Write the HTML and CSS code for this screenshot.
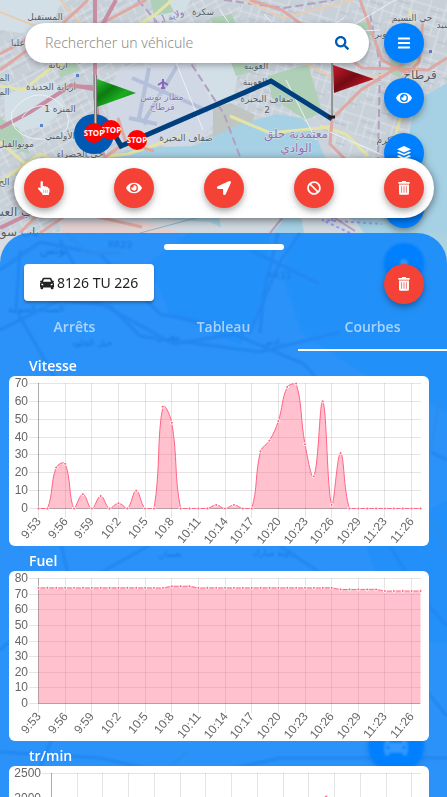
FILE: index.html
```html
<!DOCTYPE html>
<html lang="fr">
<head>
<meta charset="utf-8">
<meta name="viewport" content="width=device-width, initial-scale=1">
<title>Suivi de véhicule</title>
<link rel="stylesheet" href="styles.css">
</head>
<body>
<svg class="defs" aria-hidden="true">
  <symbol id="i-search" viewBox="0 0 512 512"><path d="M505 442.700L405.300 343c-4.500-4.500-10.600-7-17-7H372c27.600-35.300 44-79.700 44-128C416 93.100 322.900 0 208 0S0 93.100 0 208s93.100 208 208 208c48.300 0 92.700-16.400 128-44v16.300c0 6.400 2.500 12.500 7 17l99.700 99.700c9.400 9.400 24.600 9.400 33.900 0l28.300-28.300c9.400-9.400 9.400-24.600.1-34zM208 336c-70.700 0-128-57.200-128-128 0-70.700 57.200-128 128-128 70.700 0 128 57.200 128 128 0 70.700-57.200 128-128 128z"/></symbol>
  <symbol id="i-eye" viewBox="0 0 576 512"><path d="M572.520 241.400C518.290 135.590 410.930 64 288 64S57.680 135.640 3.480 241.410a32.350 32.350 0 0 0 0 29.190C57.710 376.410 165.070 448 288 448s230.320-71.640 284.520-177.410a32.350 32.350 0 0 0 0-29.190zM288 400a144 144 0 1 1 144-144 143.930 143.930 0 0 1-144 144zm0-240a95.310 95.310 0 0 0-25.310 3.790 47.850 47.850 0 0 1-66.900 66.900A95.780 95.780 0 1 0 288 160z"/></symbol>
  <symbol id="i-arrow" viewBox="0 0 512 512"><path d="M444.520 3.520L28.740 195.420c-47.970 22.390-31.980 92.750 19.190 92.750h175.910v175.910c0 51.170 70.360 67.170 92.750 19.190l191.900-415.780c15.990-38.390-25.590-79.970-63.970-63.970z"/></symbol>
  <symbol id="i-ban" viewBox="0 0 512 512"><path d="M256 8C119.034 8 8 119.033 8 256s111.034 248 248 248 248-111.034 248-248S392.967 8 256 8zm130.108 117.892c65.448 65.448 70 165.481 20.677 235.637L150.470 105.216c70.204-49.356 170.226-44.735 235.638 20.676zM125.892 386.108c-65.448-65.448-70-165.481-20.677-235.637L361.530 406.784c-70.203 49.356-170.226 44.736-235.638-20.676z"/></symbol>
  <symbol id="i-menu" viewBox="0 0 14 14"><path d="M1 1.500h12v2H1zM1 6h12v2H1zM1 10.500h12v2H1z"/></symbol>
  <symbol id="i-layers" viewBox="0 0 14 14"><path d="M7 0l7 3.200-7 3.200-7-3.200zM1.700 5.500L0 6.700l7 3.100 7-3.100-1.700-1.200L7 8zM1.700 9.100L0 10.300l7 3.200 7-3.200-1.700-1.200L7 11.600z"/></symbol>
  <symbol id="i-trash" viewBox="0 0 14 16"><path d="M4.500 1.200V1a1 1 0 0 1 1-1h3a1 1 0 0 1 1 1v.2H13.500v2H.5v-2zM1.300 4h11.400v10.200a1.500 1.500 0 0 1-1.500 1.500H2.800a1.500 1.500 0 0 1-1.500-1.500zM4 6v7.500h.8V6zm2.600 0v7.500h.8V6zm2.600 0v7.500h.8V6z" fill-rule="evenodd"/></symbol>
  <symbol id="i-hand" viewBox="0 0 14 16"><path d="M3.100 1.300a1.300 1.300 0 0 1 2.600 0V6c.5-.5 1.700-.4 2 .4.600-.5 1.700-.3 2 .5.700-.5 2-.2 2 1l.1.400c.6-.2 1.500.2 1.500 1.100V12c0 1-.5 1.400-.7 2.300V16H5.200v-1.500L.3 9.200C-.5 7.900 1 6.900 1.900 7.500l1.200 1z"/><path d="M6.600 10v3.500M8.700 10v3.500M10.800 10v3.500" stroke="#f44336" stroke-width=".5"/></symbol>
  <symbol id="i-car" viewBox="0 0 16 14"><path fill-rule="evenodd" d="M4.600 1h6.800a2 2 0 0 1 1.900 1.300l.9 2.200h1.300c.6 0 .6 1.200-.1 1.300l-.4.100c.6.400 1 1 1 1.700V11c0 .5-.3.800-.6 1v1a1 1 0 0 1-1 1h-1a1 1 0 0 1-1-1v-.8H3.600v.8a1 1 0 0 1-1 1h-1a1 1 0 0 1-1-1v-1C.3 11.800 0 11.500 0 11V7.600c0-.7.400-1.300 1-1.700l-.4-.1C-.1 5.700-.1 4.500.5 4.500h1.300l.9-2.200A2 2 0 0 1 4.600 1zm.2 1.800a.6.600 0 0 0-.5.400l-.9 2.300h9.200l-.9-2.300a.6.600 0 0 0-.5-.4zM1.500 8.300c0 1 .8 1.400 1.700 1.400.6 0 1-.2.700-.7-.3-.6-1-1.500-1.700-1.500-.4 0-.7.400-.7.800zm13 0c0-.4-.3-.8-.7-.8-.7 0-1.400.9-1.700 1.500-.3.500.1.700.7.700.9 0 1.700-.4 1.700-1.400z"/></symbol>
</svg>

<div class="app">
  <svg class="map" viewBox="0 0 447 797" preserveAspectRatio="xMidYMin slice" role="img" aria-label="Carte du trajet">
    <defs>
      <pattern id="streets" width="46" height="38" patternUnits="userSpaceOnUse" patternTransform="rotate(-28)">
        <path d="M0 5h46M0 12h30M8 19h38M0 26h46M0 32h24M6 0v38M14 0v19M22 5v33M31 0v26M40 12v26" stroke="#dde2e9" stroke-width="1" fill="none"/>
        <path d="M2 8h15M18 15h14M24 29h17M9 22h9M34 3h9" stroke="#bac1cb" stroke-width="1" fill="none"/>
      </pattern>
      <pattern id="streets2" width="34" height="42" patternUnits="userSpaceOnUse" patternTransform="rotate(17)">
        <path d="M0 6h34M10 15h24M0 24h34M0 34h20M5 0v42M13 6v28M21 0v42M29 15v27" stroke="#dde2e9" stroke-width="1" fill="none"/>
        <path d="M7 10h12M15 19h13M4 29h8M23 38h9" stroke="#b6bdc8" stroke-width="1" fill="none"/>
      </pattern>
      <linearGradient id="green" x1="0" y1="0" x2="1" y2="1"><stop offset="0" stop-color="#27c32b"/><stop offset=".35" stop-color="#0d7a12"/><stop offset=".6" stop-color="#1bab20"/><stop offset="1" stop-color="#0e7c13"/></linearGradient>
      <linearGradient id="red" x1="0" y1="0" x2="1" y2="1"><stop offset="0" stop-color="#cf1c2c"/><stop offset=".45" stop-color="#720b12"/><stop offset=".7" stop-color="#b01522"/><stop offset="1" stop-color="#750b12"/></linearGradient>
      <linearGradient id="pole"><stop offset="0" stop-color="#666"/><stop offset=".5" stop-color="#ccc"/><stop offset="1" stop-color="#555"/></linearGradient>
    </defs>
    <rect width="447" height="797" fill="#c8d0d8"/>
    <rect width="240" height="240" fill="url(#streets)"/>
    <rect x="240" width="207" height="180" fill="url(#streets2)"/>
    <rect y="235" width="447" height="562" fill="#d7dde0"/>
    <g fill="#d3dfe6">
      <path d="M0 0h62l-8 20-26 14-28-4zM196 60h44l-8 50-30 20zM155 0h36l-12 20-30 2z"/>
      <path d="M4 95l50-15 12 26-20 20-40 8z"/>
    </g>
    <g fill="#afd0b6">
      <path d="M268 76l40-12 14 48-16 8-34-22zM230 60l26-4 4 14-24 6zM150 0l18 0 6 12-20 4zM344 28l26-8 4 14-26 8zM0 118l18 10 12 26-20-6-10-8zM58 66l16-6 6 10-20 8zM396 44l12 14-8 20-12-6zM30 188l14-6 8 10-18 8zM210 18l22-4 4 10-20 6z"/>
    </g>
    <path d="M120 68l72-8 26 60-28 28-78-6-6-44z" fill="#d0d8e5"/>
    <g stroke="#b4c0da" stroke-width="4" fill="none"><path d="M132 78l76 33M149 68l-10 50 8 6M129 118l28 6M177 66l-32 54"/></g>
    <path d="M213 107l18-4 24 12-4 12-22 6-16 4z" fill="#bfc6c1"/>
    <path d="M89 164l48-16 58-2 40-20 42-12 24 4 21 20 22 22 18 26 20 8 34-4v43H92l-14-34z" fill="#a6d1e4"/>
    <path d="M447 83l-24 14-12 24-4 32 6 28 2 52h32z" fill="#a6d1e4"/>
    <path d="M308 118l24 4 62 36-8 32-48-2z" fill="#cbd4dc"/>
    <path d="M316 122l38 18 36 20-20 18-34-20z" fill="url(#streets2)"/>
    <path d="M60 218l90 0 60 4 22 11H60zM232 196l28 4 22 22-10 11h-50l-4-22zM300 210l24-6 32 18 8 11h-60z" fill="#d0d9e0"/>
    <path d="M62 222l80-1 40 12H62z" fill="#e2cfd0"/>
    <g fill="none" stroke="#b9a0bd" stroke-width="2"><path d="M235 202l24-4M240 210l30-4M270 233l22-27 12 4M318 200l28 18M330 215l25 16"/></g>
    <g fill="none" stroke="#9b9bff" stroke-width="2" stroke-dasharray="3 3"><path d="M334 182l-2 40M350 233l-28-13 60 4"/></g>
    <path d="M140 233L300 190M90 216l120-14" stroke="#8fb2c8" fill="none"/>
    <g fill="none" stroke="#b59fc0" stroke-width="2" stroke-dasharray="8 4"><path d="M138 0l48 56 38 58 18 48M370 14l10 50-2 100M224 0l60 8 50-8"/></g>
    <g fill="none" stroke="#e8ccb2" stroke-width="2"><path d="M0 12l70 28 130 14M245 0l38 18 70-18M300 60l40 22 46-8M60 0l30 34"/></g>
    <g fill="none" stroke="#e4e4a6" stroke-width="3"><path d="M0 86l24 4 24-20 60-26 48-30 16-14M0 182l40-28 30 12 24-8 34-4 60-20M320 126l26 8 22 22M410 10l6 60-14 26M230 116l40 17 60-6M392 98l10 14-16 58M0 142l44 38 44 8"/></g>
    <g fill="none" stroke="#dfa8a2" stroke-width="3"><path d="M0 70l60-44L88 0M0 54l30-16 48-2 68-36M250 0l32 10 80 58 66 2 19-12M360 0l22 60 26 14M332 120l-2 24 20 20M331 120l30-30 42-26M20 233l44-46 44-32 28-20M423 20l-4 42-20 20 4 10M118 118l8 25 28 8M40 233l32-22 70 16"/></g>
    <g fill="none" stroke="#c88da2" stroke-width="4"><path d="M95 0v96l8 60M0 128l30-16 40-26 40 2M70 85l24 4M88 156L50 204l-50 24M78 63l22-34 16-29"/></g>
    <g fill="none" stroke="#eef1f5" stroke-width="1"><path d="M12 112c14-20 34-22 48-8s10 30-8 34c-22 5-44-6-40-26zM22 118c8-14 26-16 32-6M300 34l80-4M286 80l30 60M220 10l26 38M264 14l30 34 50-30M175 60l28 70M330 132l60 26M395 0l-40 24"/></g>

    <g class="map-labels">
      <text x="45" y="20">المستقبل</text><text x="203" y="15">سكرة</text><text x="412" y="21">حي النسيم</text>
      <text x="18" y="46">عليا</text><text x="382" y="37">نوبر</text><text x="58" y="68">أريانة</text>
      <text x="51" y="90">أريانة الجديدة</text><text x="60" y="112">المنزه 1</text><text x="60" y="139">الأولمبي</text>
      <text x="16" y="147">موتوالفيل</text><text x="80" y="157">حي الخضراء</text><text x="256" y="69">العوينة</text>
      <text x="255" y="85">العوينة</text><text x="267" y="102">ضفاف البحيرة</text><text x="267" y="113">2</text>
      <text x="186" y="141">ضفاف البحيرة</text><text x="387" y="143">الكرم</text><text x="4" y="81">الم</text><text x="4" y="95">الم</text>
      <text x="4" y="185">الح</text><text class="big" x="12" y="216">باب العسل</text><text class="big" x="12" y="236">باب سويقة</text>
      <text class="big" x="420" y="79">قرطاج</text><text x="444" y="28">سيد</text>
      <g class="violet"><text x="162" y="100">مطار تونس</text><text x="162" y="110">قرطاج</text><text x="165" y="22" transform="rotate(-22 165 18)">ولاية أريانة</text>
      <text class="big" x="296" y="138">معتمدية حلق</text><text class="big" x="296" y="152">الوادي</text></g>
    </g>
    <path d="M163 79v9M158 85l5-3 5 3M161 88h4" stroke="#8768b8" stroke-width="2" fill="none"/>
    <rect x="76" y="74" width="3" height="3" fill="#5a84c8"/><rect x="40" y="124" width="3" height="3" fill="#5a84c8"/><rect x="429" y="50" width="3" height="3" fill="#6678b8"/>

    <g class="under">
      <path d="M190 233h80l-4 58-26 54-70-30-22-52z" fill="#a3cfdc"/>
      <path d="M447 233h-150l-16 40 20 60 60 40 86 40z" fill="#aad3df"/>
      <path d="M366 546l12 36 40 60h29V500z" fill="#a8d0dc"/>
      <g fill="none" stroke="#a7a2b8" stroke-width="3"><path d="M0 270l40-28 60 12 60 60 90 18 30-70 20-29M60 240l34 60 80 44 60-10 70 30 40 46 103 50M0 330l60-30 50 6 30 30 120 16 80-20M20 250l-4 60 40 70M250 250l70 34M278 233l-14 60-4 40M60 540l14 60-6 100-40 97M0 650l70-60 80-45M280 546l60 40 107 130M0 752l100 6 90 20 90-20 167 0M390 546l30 50 27 30"/></g>
      <g fill="none" stroke="#d7c6b4" stroke-width="3"><path d="M66 233l20 20 36 0M190 233l10 20M10 400l40 70-30 80M440 400l-20 100 27 50M128 797l60-45"/></g>
      <g class="map-labels"><text class="big" x="54" y="254">تونس</text><text x="120" y="248">RR23</text><text x="279" y="279">RR33</text><text x="36" y="312">السيدة المنوبية</text><text x="92" y="346">جبل الجلود</text><text x="168" y="340">مقرين</text><text x="273" y="345">رادس</text><text x="170" y="557">نعسان</text><text x="274" y="556">زاوية مبارك</text></g>
    </g>

    <circle cx="94" cy="134" r="20" fill="#0059b3"/>
    <path d="M103 130h9l9 16 150-65 61 38" fill="none" stroke="#003f7d" stroke-width="5"/>
    <path d="M331 62h2v55h-2z" fill="url(#pole)"/><path d="M333 65l41 14-40 14z" fill="url(#red)"/><path d="M328 117h7" stroke="#222" stroke-width="3"/>
    <path d="M94 75h3v60h-3z" fill="url(#pole)"/><path d="M97 79l39 14-39 14z" fill="url(#green)"/>
    <g class="stop"><circle cx="111" cy="130" r="10"/><text x="111" y="133">STOP</text><circle cx="94" cy="133" r="10"/><text x="94" y="136">STOP</text><circle cx="137" cy="140" r="10"/><text x="137" y="143">STOP</text></g>
  </svg>

  <nav class="fabs" aria-label="Outils de la carte">
    <button class="fab" aria-label="Menu"><svg><use href="#i-menu"/></svg></button>
    <button class="fab" aria-label="Affichage"><svg class="wide"><use href="#i-eye"/></svg></button>
    <button class="fab" aria-label="Couches"><svg><use href="#i-layers"/></svg></button>
    <button class="fab" aria-label="Position"><svg><use href="#i-arrow"/></svg></button>
    <button class="fab" aria-label="Repère"><svg viewBox="0 0 14 14"><circle cx="7" cy="7" r="4"/></svg></button>
  </nav>
  <button class="fab fab-car" aria-label="Véhicules"><svg><use href="#i-car"/></svg></button>

  <form class="search">
    <input type="search" aria-label="Rechercher un véhicule" placeholder="Rechercher un véhicule">
    <button type="button" aria-label="Rechercher"><svg><use href="#i-search"/></svg></button>
  </form>

  <div class="toolbar">
    <button class="fab danger" aria-label="Sélectionner"><svg><use href="#i-hand"/></svg></button>
    <button class="fab danger" aria-label="Voir"><svg class="wide"><use href="#i-eye"/></svg></button>
    <button class="fab danger" aria-label="Suivre"><svg><use href="#i-arrow"/></svg></button>
    <button class="fab danger" aria-label="Bloquer"><svg><use href="#i-ban"/></svg></button>
    <button class="fab danger" aria-label="Supprimer"><svg><use href="#i-trash"/></svg></button>
  </div>

  <main class="panel">
    <div class="handle"></div>
    <div class="vehicle-row">
      <button class="vehicle"><svg><use href="#i-car"/></svg>8126 TU 226</button>
      <button class="fab danger" aria-label="Supprimer le véhicule"><svg><use href="#i-trash"/></svg></button>
    </div>
    <div class="tabs" role="tablist">
      <button role="tab" aria-selected="false">Arrêts</button>
      <button role="tab" aria-selected="false">Tableau</button>
      <button role="tab" aria-selected="true">Courbes</button>
    </div>
    <section class="chart"><h2>Vitesse</h2><div class="card" data-chart="speed"></div></section>
    <section class="chart"><h2>Fuel</h2><div class="card" data-chart="fuel"></div></section>
    <section class="chart"><h2>tr/min</h2><div class="card" data-chart="rpm"></div></section>
  </main>
</div>
<script src="charts.js"></script>
</body>
</html>
```
FILE: styles.css
```css
* { box-sizing: border-box; }

body {
  margin: 0;
  font-family: "Noto Sans", "Open Sans", sans-serif;
  font-size: 14px;
  line-height: 20px;
  color: #222;
}

button, input { font: inherit; color: inherit; border: 0; padding: 0; background: none; }
button { cursor: pointer; }
.defs { position: absolute; width: 0; height: 0; }

.app {
  position: relative;
  height: 100vh;
  overflow: hidden;
  padding-top: 23px;
}

.map { position: absolute; inset: 0; width: 100%; height: 100%; }
.map-labels text {
  font-family: "DejaVu Sans", sans-serif;
  font-size: 9px;
  text-anchor: middle;
  fill: #555b66;
  paint-order: stroke;
  stroke: #dde2e8;
  stroke-width: 1px;
}
.map-labels .big { font-size: 12px; }
.map-labels .violet text { fill: #8a72b4; }
.stop circle { fill: #f00; }
.stop text {
  font-family: "Open Sans", sans-serif;
  font-size: 8px;
  font-weight: 700;
  fill: #fff;
  text-anchor: middle;
}

.fabs {
  position: absolute;
  top: 23px;
  right: 23px;
  display: flex;
  flex-direction: column;
  gap: 15px;
}
.fab {
  display: flex;
  align-items: center;
  justify-content: center;
  width: 40px;
  height: 40px;
  border-radius: 50%;
  background: #0080ff;
  color: #fff;
  box-shadow: 0 3px 5px rgba(0, 0, 0, .2), 0 4px 10px rgba(0, 0, 0, .16);
}
.fab svg { width: 14px; height: 14px; fill: currentColor; }
.fab svg.wide { width: 16px; }
.fab.danger { background: #f44336; }
.fab-car {
  position: absolute;
  right: 23px;
  bottom: 24px;
  width: 56px;
  height: 56px;
}
.fab-car svg { width: 24px; height: 24px; }

.search {
  position: relative;
  display: flex;
  align-items: center;
  height: 40px;
  margin: 0 78px 0 25px;
  padding: 0 20px;
  border-radius: 20px;
  background: #fff;
  box-shadow: 0 2px 6px rgba(0, 0, 0, .3);
}
.search input { flex: 1; min-width: 0; outline: 0; font-weight: 300; }
.search input::placeholder { color: #8c8c8c; opacity: 1; }
.search button { display: flex; color: #0059b3; }
.search svg { width: 14px; height: 14px; fill: currentColor; }

.toolbar {
  position: relative;
  display: flex;
  align-items: center;
  justify-content: space-between;
  height: 60px;
  margin: 95px 13px 15px 14px;
  padding: 0 10px;
  border-radius: 30px;
  background: #fff;
  box-shadow: 0 2px 8px rgba(0, 0, 0, .5);
}

.panel {
  position: relative;
  min-height: calc(100vh - 233px);
  padding-top: 11px;
  border-radius: 30px 30px 0 0;
  background: rgba(0, 128, 255, .8);
  backdrop-filter: blur(1px);
}
.handle {
  width: 120px;
  height: 6px;
  margin: 0 auto 14px;
  border-radius: 3px;
  background: #fff;
}
.vehicle-row {
  display: flex;
  align-items: flex-start;
  justify-content: space-between;
  padding: 0 23px 0 24px;
}
.vehicle {
  display: flex;
  align-items: center;
  gap: 3px;
  height: 37px;
  padding: 0 16px;
  border-radius: 4px;
  background: #fff;
  box-shadow: 0 2px 3px rgba(0, 0, 0, .3);
}
.vehicle svg { width: 14px; height: 14px; fill: currentColor; }

.tabs { display: grid; grid-template-columns: repeat(3, 1fr); }
.tabs button {
  height: 47px;
  border-bottom: 2px solid transparent;
  color: rgba(255, 255, 255, .6);
  font-weight: 600;
}
.tabs button[aria-selected="true"] { border-color: #fff; }

.chart { padding: 5px 18px 0 9px; }
.chart h2 {
  margin: 0 0 0 20px;
  color: #fff;
  font-size: 14px;
  font-weight: 600;
  line-height: 20px;
}
.tabs button, .chart h2 { font-family: "Open Sans", "Noto Sans", sans-serif; }
.card { overflow: hidden; border-radius: 6px; background: #fff; }
.card svg { display: block; width: 100%; height: auto; }
.card text {
  font-family: "Liberation Sans", sans-serif;
  font-size: 12px;
  fill: #666;
  text-anchor: end;
  dominant-baseline: central;
}
.grid { stroke: rgba(0, 0, 0, .1); fill: none; }
.axis { stroke: rgba(0, 0, 0, .25); fill: none; }
.area { fill: rgba(255, 99, 132, .4); }
.line { fill: none; stroke: #ff6384; }
.dot { fill: #ff6384; stroke: #fff; }
```
FILE: charts.js
```js
const zeros = n => Array(n).fill(0);
const labels = ['9:53', '9:56', '9:59', '10:2', '10:5', '10:8', '10:11', '10:14', '10:17', '10:20', '10:23', '10:26', '10:29', '11:23', '11:26'];

const charts = {
  speed: {
    max: 70, step: 10, left: 29,
    data: [0, 0, 23, 25, 0, 8, 0, 7, 0, 3, 0, 10, 0, 0, 57, 48, 0, 0, 0, 0, 2, 0, 2, 0, 0, 32, 38, 49, 68, 70, 36, 18, 60, 2, 31, ...zeros(9)]
  },
  fuel: {
    max: 80, step: 10, left: 29,
    data: [...Array(15).fill(74), 75, 75, 75, ...Array(16).fill(74), ...Array(5).fill(73), ...Array(5).fill(72)]
  },
  rpm: {
    max: 2500, step: 500, left: 42,
    data: [...Array(32).fill(850), 2040, ...Array(11).fill(850)]
  }
};

// Smoothed line through the points; control points stay inside the plot.
function curve(pts, top, bottom) {
  const clamp = y => Math.max(top, Math.min(bottom, y));
  const ctrl = pts.map((p, i) => {
    const a = pts[i - 1] || p, b = pts[i + 1] || p;
    const d1 = Math.hypot(p[0] - a[0], p[1] - a[1]);
    const d2 = Math.hypot(b[0] - p[0], b[1] - p[1]);
    const f1 = 0.4 * d1 / (d1 + d2), f2 = 0.4 * d2 / (d1 + d2);
    const dx = b[0] - a[0], dy = b[1] - a[1];
    return [p[0] - f1 * dx, clamp(p[1] - f1 * dy), p[0] + f2 * dx, clamp(p[1] + f2 * dy)];
  });
  return pts.slice(1).reduce((d, p, i) =>
    `${d}C${ctrl[i][2]} ${ctrl[i][3]} ${ctrl[i + 1][0]} ${ctrl[i + 1][1]} ${p[0]} ${p[1]}`, `M${pts[0]}`);
}

function draw({ max, step, left, data }) {
  const right = 411, top = 7, bottom = 132;
  const x = i => left + i * (right - left) / (data.length - 1);
  const y = v => bottom - v / max * (bottom - top);
  let grid = '', text = '';
  for (let v = 0; v <= max; v += step) {
    const gy = Math.round(y(v)) + 0.5;
    grid += `M${left - 9} ${gy}H${right + 1}`;
    text += `<text x="${left - 10}" y="${y(v)}">${v}</text>`;
  }
  labels.forEach((label, i) => {
    const gx = Math.round(x(i * 3)) + 0.5;
    grid += `M${gx} ${top}V${bottom + 10}`;
    text += `<text transform="translate(${gx} ${bottom + 11}) rotate(-50)">${label}</text>`;
  });
  const pts = data.map((v, i) => [x(i) + 0.5, y(v) + 0.5]);
  const d = curve(pts, top + 0.5, bottom + 0.5);
  const dots = pts.map(p => `<circle class="dot" cx="${p[0]}" cy="${p[1]}" r="1.5"/>`).join('');
  return `<svg viewBox="0 0 420 170"><path class="grid" d="${grid}"/>
    <path class="axis" d="M${left + 0.5} ${top}V${bottom + 0.5}H${right}"/>
    <path class="area" d="${d}V${bottom + 0.5}H${left + 0.5}Z"/>
    <path class="line" d="${d}"/>${dots}${text}</svg>`;
}

document.querySelectorAll('[data-chart]').forEach(el => {
  el.innerHTML = draw(charts[el.dataset.chart]);
});
```
